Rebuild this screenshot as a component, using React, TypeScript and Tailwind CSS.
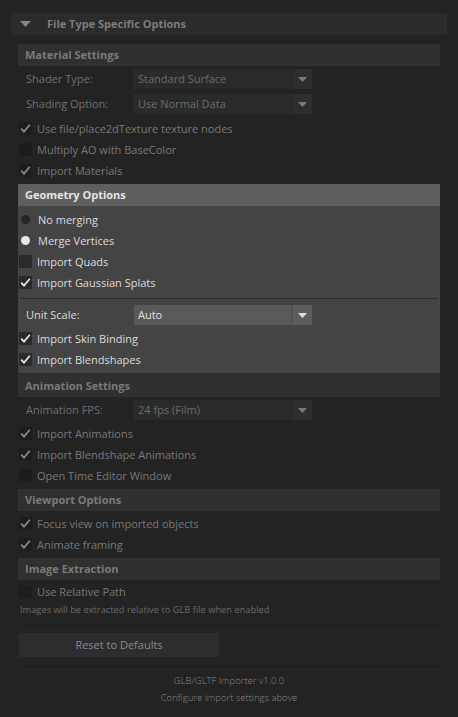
import React from 'react';

type CheckProps = { label: string; checked?: boolean; bright?: boolean };

const Check: React.FC<CheckProps> = ({ label, checked, bright }) => (
  <div className="h-[21px] flex items-center pl-[1px]">
    <span className={`w-[13px] h-[13px] flex items-center justify-center ${bright ? 'bg-[#2a2a2a]' : 'bg-[#1d1d1d]'}`}>
      {checked && (
        <svg width="13" height="13" viewBox="0 0 13 13">
          <path d="M2.2 6.6 L5 9.6 L10.8 2.8" fill="none" stroke={bright ? '#e6e6e6' : '#8a8a8a'} strokeWidth="1.7" />
        </svg>
      )}
    </span>
    <span className={`ml-[5px] ${bright ? 'text-[#dcdcdc]' : 'text-[#787878]'}`}>{label}</span>
  </div>
);

const Radio: React.FC<{ label: string; on?: boolean }> = ({ label, on }) => (
  <div className="h-[21px] flex items-center pl-[3px]">
    <span className={`w-[9px] h-[9px] rounded-full ${on ? 'bg-[#e8e8e8]' : 'bg-[#262626]'}`} />
    <span className="ml-[8px] text-[#dcdcdc]">{label}</span>
  </div>
);

const Arrow: React.FC<{ color: string }> = ({ color }) => (
  <svg width="9" height="5" viewBox="0 0 9 5">
    <path d="M0 0 H9 L4.5 5 Z" fill={color} />
  </svg>
);

const Dropdown: React.FC<{ label: string; value: string; bright?: boolean }> = ({ label, value, bright }) => (
  <div className="h-[20px] flex items-center">
    <span className={`w-[116px] pl-[8px] ${bright ? 'text-[#dcdcdc]' : 'text-[#707070]'}`}>{label}</span>
    <div className={`w-[178px] h-[20px] flex ${bright ? 'bg-[#595959]' : 'bg-[#2a2a2a]'}`}>
      <span className={`flex-1 pl-[4px] flex items-center ${bright ? 'text-[#e2e2e2]' : 'text-[#6c6c6c]'}`}>{value}</span>
      <span className={`w-[20px] flex items-center justify-center border-l ${bright ? 'bg-[#5d5d5d] border-[#4d4d4d]' : 'bg-[#2e2e2e] border-[#262626]'}`}>
        <Arrow color={bright ? '#e0e0e0' : '#7a7a7a'} />
      </span>
    </div>
  </div>
);

const SectionHeader: React.FC<{ title: string; bright?: boolean }> = ({ title, bright }) => (
  <div className={`h-[22px] flex items-center px-[7px] font-bold ${bright ? 'bg-[#5f5f5f] text-[#e4e4e4]' : 'bg-[#303030] text-[#7a7a7a]'}`}>
    {title}
  </div>
);

export default function App() {
  return (
    <div className="w-[458px] h-[717px] bg-[#232323] pt-[13px] text-[11px] leading-[14px] font-['Open_Sans',sans-serif] overflow-hidden">
      <div className="ml-[11px] w-[436px] h-[22px] bg-[#2b2b2b] flex items-center">
        <span className="ml-[9px]">
          <svg width="11" height="6" viewBox="0 0 11 6">
            <path d="M0 0 H11 L5.5 6 Z" fill="#858585" />
          </svg>
        </span>
        <span className="ml-[16px] font-bold text-[#7c7c7c]">File Type Specific Options</span>
      </div>

      <div className="ml-[18px] w-[422px] mt-[9px]">
        <SectionHeader title="Material Settings" />
        <div className="mt-[3px] flex flex-col gap-[5px]">
          <Dropdown label="Shader Type:" value="Standard Surface" />
          <Dropdown label="Shading Option:" value="Use Normal Data" />
        </div>
        <div className="mt-[4px]">
          <Check label="Use file/place2dTexture texture nodes" checked />
          <Check label="Multiply AO with BaseColor" />
          <Check label="Import Materials" checked />
        </div>

        <div className="mt-[3px]">
          <SectionHeader title="Geometry Options" bright />
          <div className="bg-[#444444] pt-[3px] pb-[3px] border-b-2 border-[#2c2c2c]">
            <Radio label="No merging" />
            <Radio label="Merge Vertices" on />
            <Check label="Import Quads" bright />
            <Check label="Import Gaussian Splats" checked bright />
            <div className="mt-[5px] mx-[2px] h-px bg-[#2c2c2c]" />
            <div className="mt-[6px]">
              <Dropdown label="Unit Scale:" value="Auto" bright />
            </div>
            <div className="mt-[3px]">
              <Check label="Import Skin Binding" checked bright />
              <Check label="Import Blendshapes" checked bright />
            </div>
          </div>
        </div>

        <div>
          <SectionHeader title="Animation Settings" />
          <div className="mt-[3px]">
            <Dropdown label="Animation FPS:" value="24 fps (Film)" />
          </div>
          <div className="mt-[3px]">
            <Check label="Import Animations" checked />
            <Check label="Import Blendshape Animations" checked />
            <Check label="Open Time Editor Window" />
          </div>
        </div>

        <div className="mt-[3px]">
          <SectionHeader title="Viewport Options" />
          <div className="mt-[2px]">
            <Check label="Focus view on imported objects" checked />
            <Check label="Animate framing" checked />
          </div>
        </div>

        <div className="mt-[3px]">
          <SectionHeader title="Image Extraction" />
          <div className="mt-[1px]">
            <Check label="Use Relative Path" />
          </div>
          <p className="mt-[1px] pl-[2px] text-[9.3px] leading-[14px] text-[#6a6a6a]">
            Images will be extracted relative to GLB file when enabled
          </p>
        </div>

        <div className="mt-[8px] ml-[2px] h-px bg-[#1a1a1a]" />
        <button className="mt-[7px] ml-[1px] w-[200px] h-[24px] bg-[#2d2d2d] text-[#8c8c8c] text-[11px] flex items-center justify-center">
          Reset to Defaults
        </button>
        <div className="mt-[9px] ml-[2px] h-px bg-[#1a1a1a]" />

        <div className="mt-[5px] flex flex-col items-center text-[9.5px] leading-[17px] text-[#8a8a8a] font-light">
          <span>GLB/GLTF Importer v1.0.0</span>
          <span>Configure import settings above</span>
        </div>
      </div>
    </div>
  );
}
